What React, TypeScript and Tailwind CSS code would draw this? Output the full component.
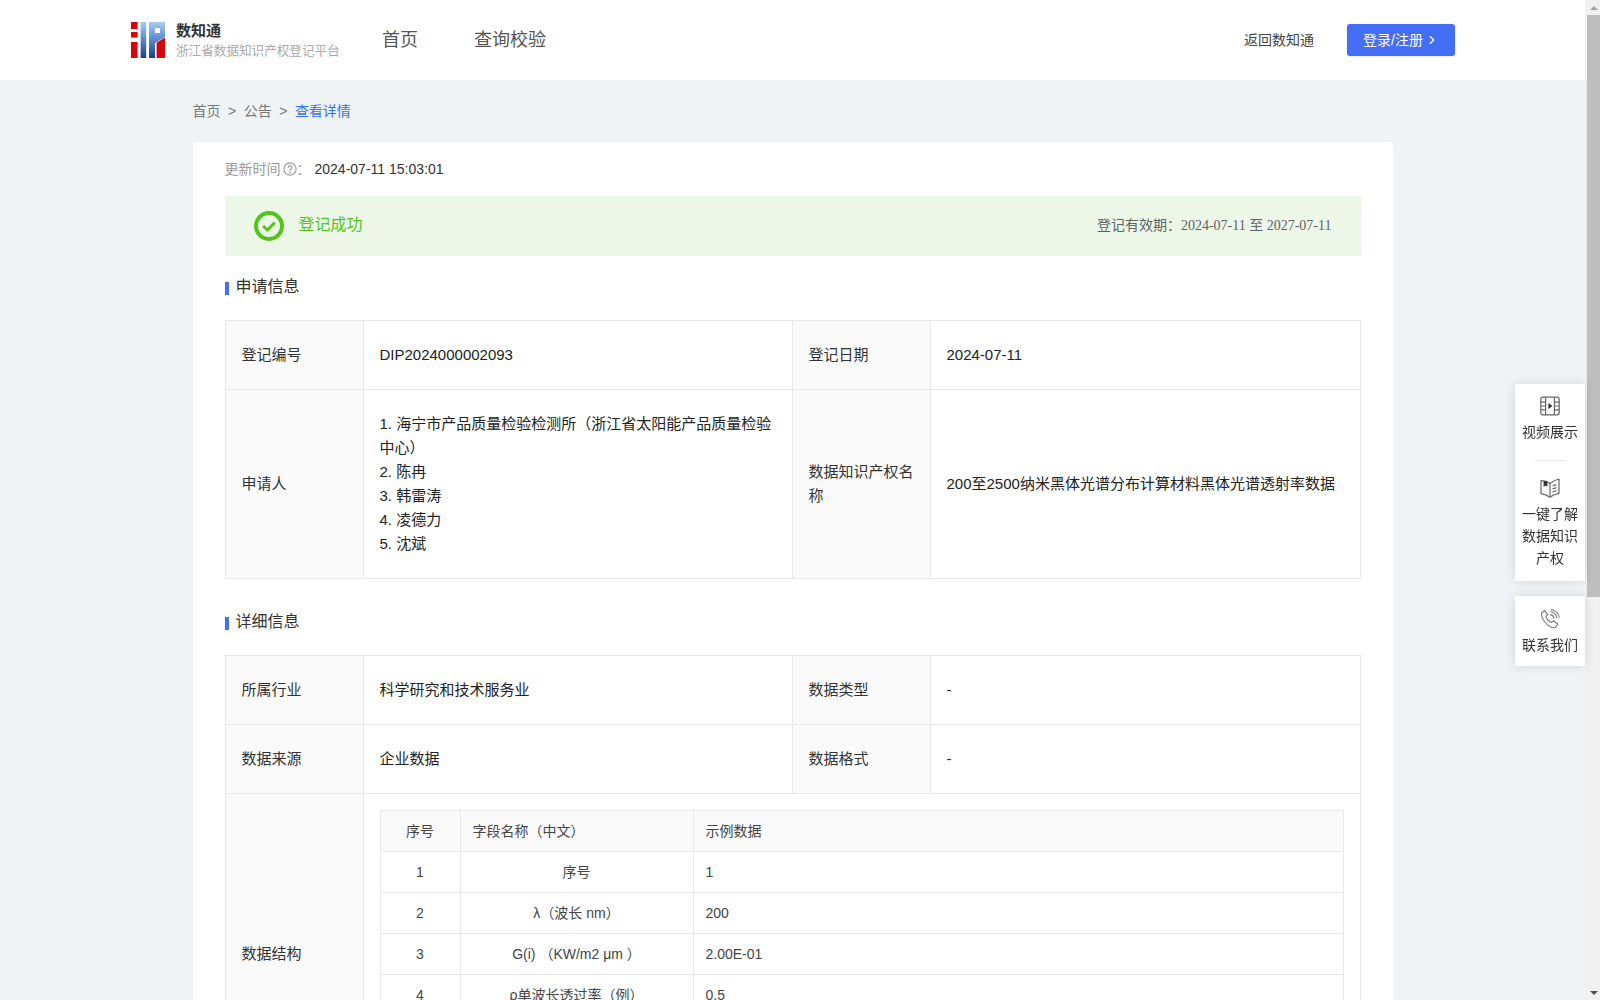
import type { ReactNode } from "react";
import { ChevronRight } from "lucide-react";

const FONT = "[font-family:'Liberation_Sans','Noto_Sans_CJK_SC',sans-serif]";

// Logo mark: red "i" plus the blue gradient "I" and "P"
function Logo() {
  return (
    <svg width="34" height="36" viewBox="0 0 34 36" className="shrink-0">
      <defs>
        <linearGradient id="logoBlue" x1="0" y1="0" x2="0" y2="1">
          <stop offset="0" stopColor="#a9cdf0" />
          <stop offset="0.45" stopColor="#5c8fd0" />
          <stop offset="1" stopColor="#1f3c8c" />
        </linearGradient>
      </defs>
      <rect x="0" y="0" width="6.6" height="7" fill="#d8060c" />
      <rect x="0" y="10" width="6.6" height="5.6" fill="#d8060c" />
      <rect x="0" y="20" width="6.6" height="16" fill="#d8060c" />
      <rect x="9.6" y="0" width="5.6" height="36" fill="url(#logoBlue)" />
      <path d="M18 0H34V15L24 21V36H18Z" fill="url(#logoBlue)" />
      <rect x="24" y="6" width="5" height="5" fill="#fff" />
      <path d="M34 15.5V36H25.6V20.5Z" fill="#d8060c" />
    </svg>
  );
}

function FilmIcon() {
  return (
    <svg width="20" height="20" viewBox="0 0 20 20" fill="none" stroke="#666" strokeWidth="1.2">
      <rect x="0.8" y="1.2" width="18.4" height="17.6" rx="2" />
      <path d="M5.6 1.2V18.8M14.4 1.2V18.8M0.8 6.2H5.6M0.8 10H5.6M0.8 13.8H5.6M14.4 6.2H19.2M14.4 10H19.2M14.4 13.8H19.2" />
      <path d="M8.4 7L12.4 10L8.4 13Z" fill="#333" stroke="none" />
    </svg>
  );
}

function BookIcon() {
  return (
    <svg width="20" height="20" viewBox="0 0 20 20" fill="none" stroke="#666" strokeWidth="1.2" strokeLinejoin="round">
      <path d="M1 2.6C4 2.6 7.6 3.6 10 5.4C12.4 3.6 15.6 1.8 19 1V15.4C15.6 16 12.4 17.4 10 19.2C7.6 17.4 4 16 1 15.6Z" />
      <path d="M10 5.4V19" />
      <path d="M3.6 2.8V9L5.6 7.6L7.4 9V3.6Z" fill="#333" stroke="none" />
      <path d="M12.4 8L16.4 6.6M12.4 11L16.4 9.6M12.4 14L16.4 12.6" />
    </svg>
  );
}

function PhoneIcon() {
  return (
    <svg width="20" height="20" viewBox="0 0 20 20" fill="none" stroke="#777" strokeWidth="1.1" strokeLinecap="round" strokeLinejoin="round">
      <path d="M2.2 3.2L4.6 1.4L7.6 5.6L6 7.4C6.6 9.8 9.2 12.6 11.6 13.4L13.4 11.8L17.8 15L16 17.6C14.4 19.4 11 18.6 7.6 15.8C3 12 0.4 6.6 2.2 3.2Z" />
      <path d="M10.4 5.6C12.2 6 13.6 7.4 14 9.2M10.8 2.8C13.8 3.4 16.2 5.8 16.8 8.8M11.2 0.6C15 1.2 18.4 4.4 19.2 8.2" />
    </svg>
  );
}

function SectionTitle({ children }: { children: ReactNode }) {
  return (
    <div className="flex items-center h-6 text-[16px] text-[#333]">
      <span className="w-1 h-[13px] bg-[#446ef5] mr-[7px] mt-0.5" />
      {children}
    </div>
  );
}

function Label({ children }: { children: ReactNode }) {
  return <td className="border border-[#e8e8e8] bg-[#fafafa] px-4 leading-6 text-[#333]">{children}</td>;
}

function Value({ children }: { children: ReactNode }) {
  return <td className="border border-[#e8e8e8] px-4 leading-6 text-[#222]">{children}</td>;
}

function Cols() {
  return (
    <colgroup>
      <col className="w-[138px]" />
      <col className="w-[429px]" />
      <col className="w-[138px]" />
      <col />
    </colgroup>
  );
}

const fields = [
  ["1", "序号", "1"],
  ["2", "λ（波长 nm）", "200"],
  ["3", "G(i) （KW/m2 μm ）", "2.00E-01"],
  ["4", "ρ单波长透过率（例）", "0.5"],
  ["5", "τ单波长透过率（例）", "0.5"],
  ["6", "α单波长吸收率（例）", "0.5"],
];

function FieldTable() {
  const cell = "border border-[#e8e8e8] h-[41px] text-[14px]";
  return (
    <table className="w-full table-fixed border-collapse text-[#444]">
      <colgroup>
        <col className="w-[80px]" />
        <col className="w-[233px]" />
        <col />
      </colgroup>
      <thead>
        <tr className="bg-[#fafafa]">
          <th className={`${cell} font-normal text-center`}>序号</th>
          <th className={`${cell} font-normal text-left px-3`}>字段名称（中文）</th>
          <th className={`${cell} font-normal text-left px-3`}>示例数据</th>
        </tr>
      </thead>
      <tbody>
        {fields.map(row => (
          <tr key={row[0]}>
            <td className={`${cell} text-center`}>{row[0]}</td>
            <td className={`${cell} text-center px-3`}>{row[1]}</td>
            <td className={`${cell} px-3`}>{row[2]}</td>
          </tr>
        ))}
      </tbody>
    </table>
  );
}

function SideItem({ icon, lines }: { icon: ReactNode; lines: string[] }) {
  return (
    <div className="flex flex-col items-center">
      <div className="h-5">{icon}</div>
      <div className="mt-[5px] text-[14px] leading-[22px] text-[#333] text-center">
        {lines.map(l => (
          <div key={l}>{l}</div>
        ))}
      </div>
    </div>
  );
}

export default function App() {
  return (
    <div className={`flex h-screen bg-[#eff3f6] ${FONT}`}>
      <div className="flex-1 min-w-0 overflow-y-auto [scrollbar-width:none]">
        <header className="h-20 bg-white flex items-center pl-[131px] pr-[130px]">
          <Logo />
          <div className="ml-[11px] w-[206px] pt-0.5">
            <div className="text-[15px] leading-5 font-bold text-[#333]">数知通</div>
            <div className="text-[12.6px] leading-5 text-[#aaa] whitespace-nowrap">浙江省数据知识产权登记平台</div>
          </div>
          <nav className="flex gap-[56px] text-[18px] text-[#555]">
            <span>首页</span>
            <span>查询校验</span>
          </nav>
          <div className="ml-auto flex items-center">
            <span className="text-[14px] text-[#444]">返回数知通</span>
            <button className="ml-[33px] w-[108px] h-8 rounded-[3px] bg-[#446ef5] text-white text-[14px] flex items-center justify-center shadow-[0_1px_3px_rgba(0,0,0,0.1)]">
              登录/注册
              <ChevronRight size={14} className="ml-0.5" />
            </button>
          </div>
        </header>

        <main className="w-[1200px] mx-auto pb-10">
          <div className="h-[62px] flex items-center gap-[7.5px] text-[14px] text-[#777]">
            <span>首页</span>
            <span>&gt;</span>
            <span>公告</span>
            <span>&gt;</span>
            <span className="text-[#3a6ff7]">查看详情</span>
          </div>

          <section className="bg-white rounded-[4px] px-8 pt-[17px] pb-8">
            <div className="flex items-center h-5 text-[14px]">
              <span className="text-[#999]">更新时间</span>
              <svg width="14" height="14" viewBox="0 0 24 24" fill="none" stroke="#999" strokeWidth="2" className="ml-[2px]">
                <circle cx="12" cy="12" r="10.5" />
                <path d="M9 9.4a3 3 0 1 1 4.6 2.5c-1 .7-1.6 1.3-1.6 2.6" strokeLinecap="round" />
                <circle cx="12" cy="18" r="0.6" fill="#999" />
              </svg>
              <span className="text-[#999] w-[18px]">：</span>
              <span className="text-[#333]">2024-07-11 15:03:01</span>
            </div>

            <div className="mt-[17px] h-[60px] bg-[#ecf7e8] flex items-center pl-[29px] pr-[29px]">
              <svg width="30" height="30" viewBox="0 0 30 30" fill="none" stroke="#52c41a">
                <circle cx="15" cy="15" r="13" strokeWidth="4" />
                <path d="M9.2 15L13.4 19L20.8 11.6" strokeWidth="3" />
              </svg>
              <span className="ml-[15px] mb-0.5 text-[16px] text-[#52c41a]">登记成功</span>
              <span className="ml-auto mb-0.5 text-[14px] text-[#606266]">
                登记有效期：<span className="[font-family:'Liberation_Serif','Noto_Sans_CJK_SC',serif]">2024-07-11 至 2027-07-11</span>
              </span>
            </div>

            <div className="mt-[19px]">
              <SectionTitle>申请信息</SectionTitle>
            </div>
            <table className="mt-[21px] w-full table-fixed border-collapse text-[15px]">
              <Cols />
              <tbody>
                <tr className="h-[69px]">
                  <Label>登记编号</Label>
                  <Value>DIP2024000002093</Value>
                  <Label>登记日期</Label>
                  <Value>2024-07-11</Value>
                </tr>
                <tr className="h-[189px]">
                  <Label>申请人</Label>
                  <Value>
                    <div>1. 海宁市产品质量检验检测所（浙江省太阳能产品质量检验中心）</div>
                    <div>2. 陈冉</div>
                    <div>3. 韩雷涛</div>
                    <div>4. 凌德力</div>
                    <div>5. 沈斌</div>
                  </Value>
                  <Label>数据知识产权名称</Label>
                  <Value>200至2500纳米黑体光谱分布计算材料黑体光谱透射率数据</Value>
                </tr>
              </tbody>
            </table>

            <div className="mt-[31px]">
              <SectionTitle>详细信息</SectionTitle>
            </div>
            <table className="mt-[21px] w-full table-fixed border-collapse text-[15px]">
              <Cols />
              <tbody>
                <tr className="h-[69px]">
                  <Label>所属行业</Label>
                  <Value>科学研究和技术服务业</Value>
                  <Label>数据类型</Label>
                  <Value>-</Value>
                </tr>
                <tr className="h-[69px]">
                  <Label>数据来源</Label>
                  <Value>企业数据</Value>
                  <Label>数据格式</Label>
                  <Value>-</Value>
                </tr>
                <tr>
                  <Label>数据结构</Label>
                  <td colSpan={3} className="border border-[#e8e8e8] p-4">
                    <FieldTable />
                  </td>
                </tr>
              </tbody>
            </table>
          </section>
        </main>
      </div>

      {/* scrollbar column, the headless page shows none of its own */}
      <div className="w-[15px] shrink-0 bg-[#f1f1f1] flex flex-col">
        <div className="h-[15px] flex items-center justify-center pl-[2px]">
          <div className="w-0 h-0 border-x-4 border-x-transparent border-b-4 border-b-[#a3a3a3]" />
        </div>
        <div className="h-[582px] ml-[2px] bg-[#bebebe]" />
        <div className="mt-auto h-[15px] flex items-center justify-center pl-[2px]">
          <div className="w-0 h-0 border-x-4 border-x-transparent border-t-4 border-t-[#505050]" />
        </div>
      </div>

      {/* floating side tools */}
      <aside className="fixed right-[15px] top-[384px] w-[70px] flex flex-col gap-[15px]">
        <div className="h-[197px] bg-white pt-3 shadow-[0_0_10px_rgba(0,0,0,0.12)]">
          <SideItem icon={<FilmIcon />} lines={["视频展示"]} />
          <div className="w-8 h-px bg-[#e8e8e8] mx-auto mt-[17px] mb-[17px]" />
          <SideItem icon={<BookIcon />} lines={["一键了解", "数据知识", "产权"]} />
        </div>
        <div className="h-[70px] bg-white pt-[13px] shadow-[0_0_10px_rgba(0,0,0,0.12)]">
          <SideItem icon={<PhoneIcon />} lines={["联系我们"]} />
        </div>
      </aside>
    </div>
  );
}
